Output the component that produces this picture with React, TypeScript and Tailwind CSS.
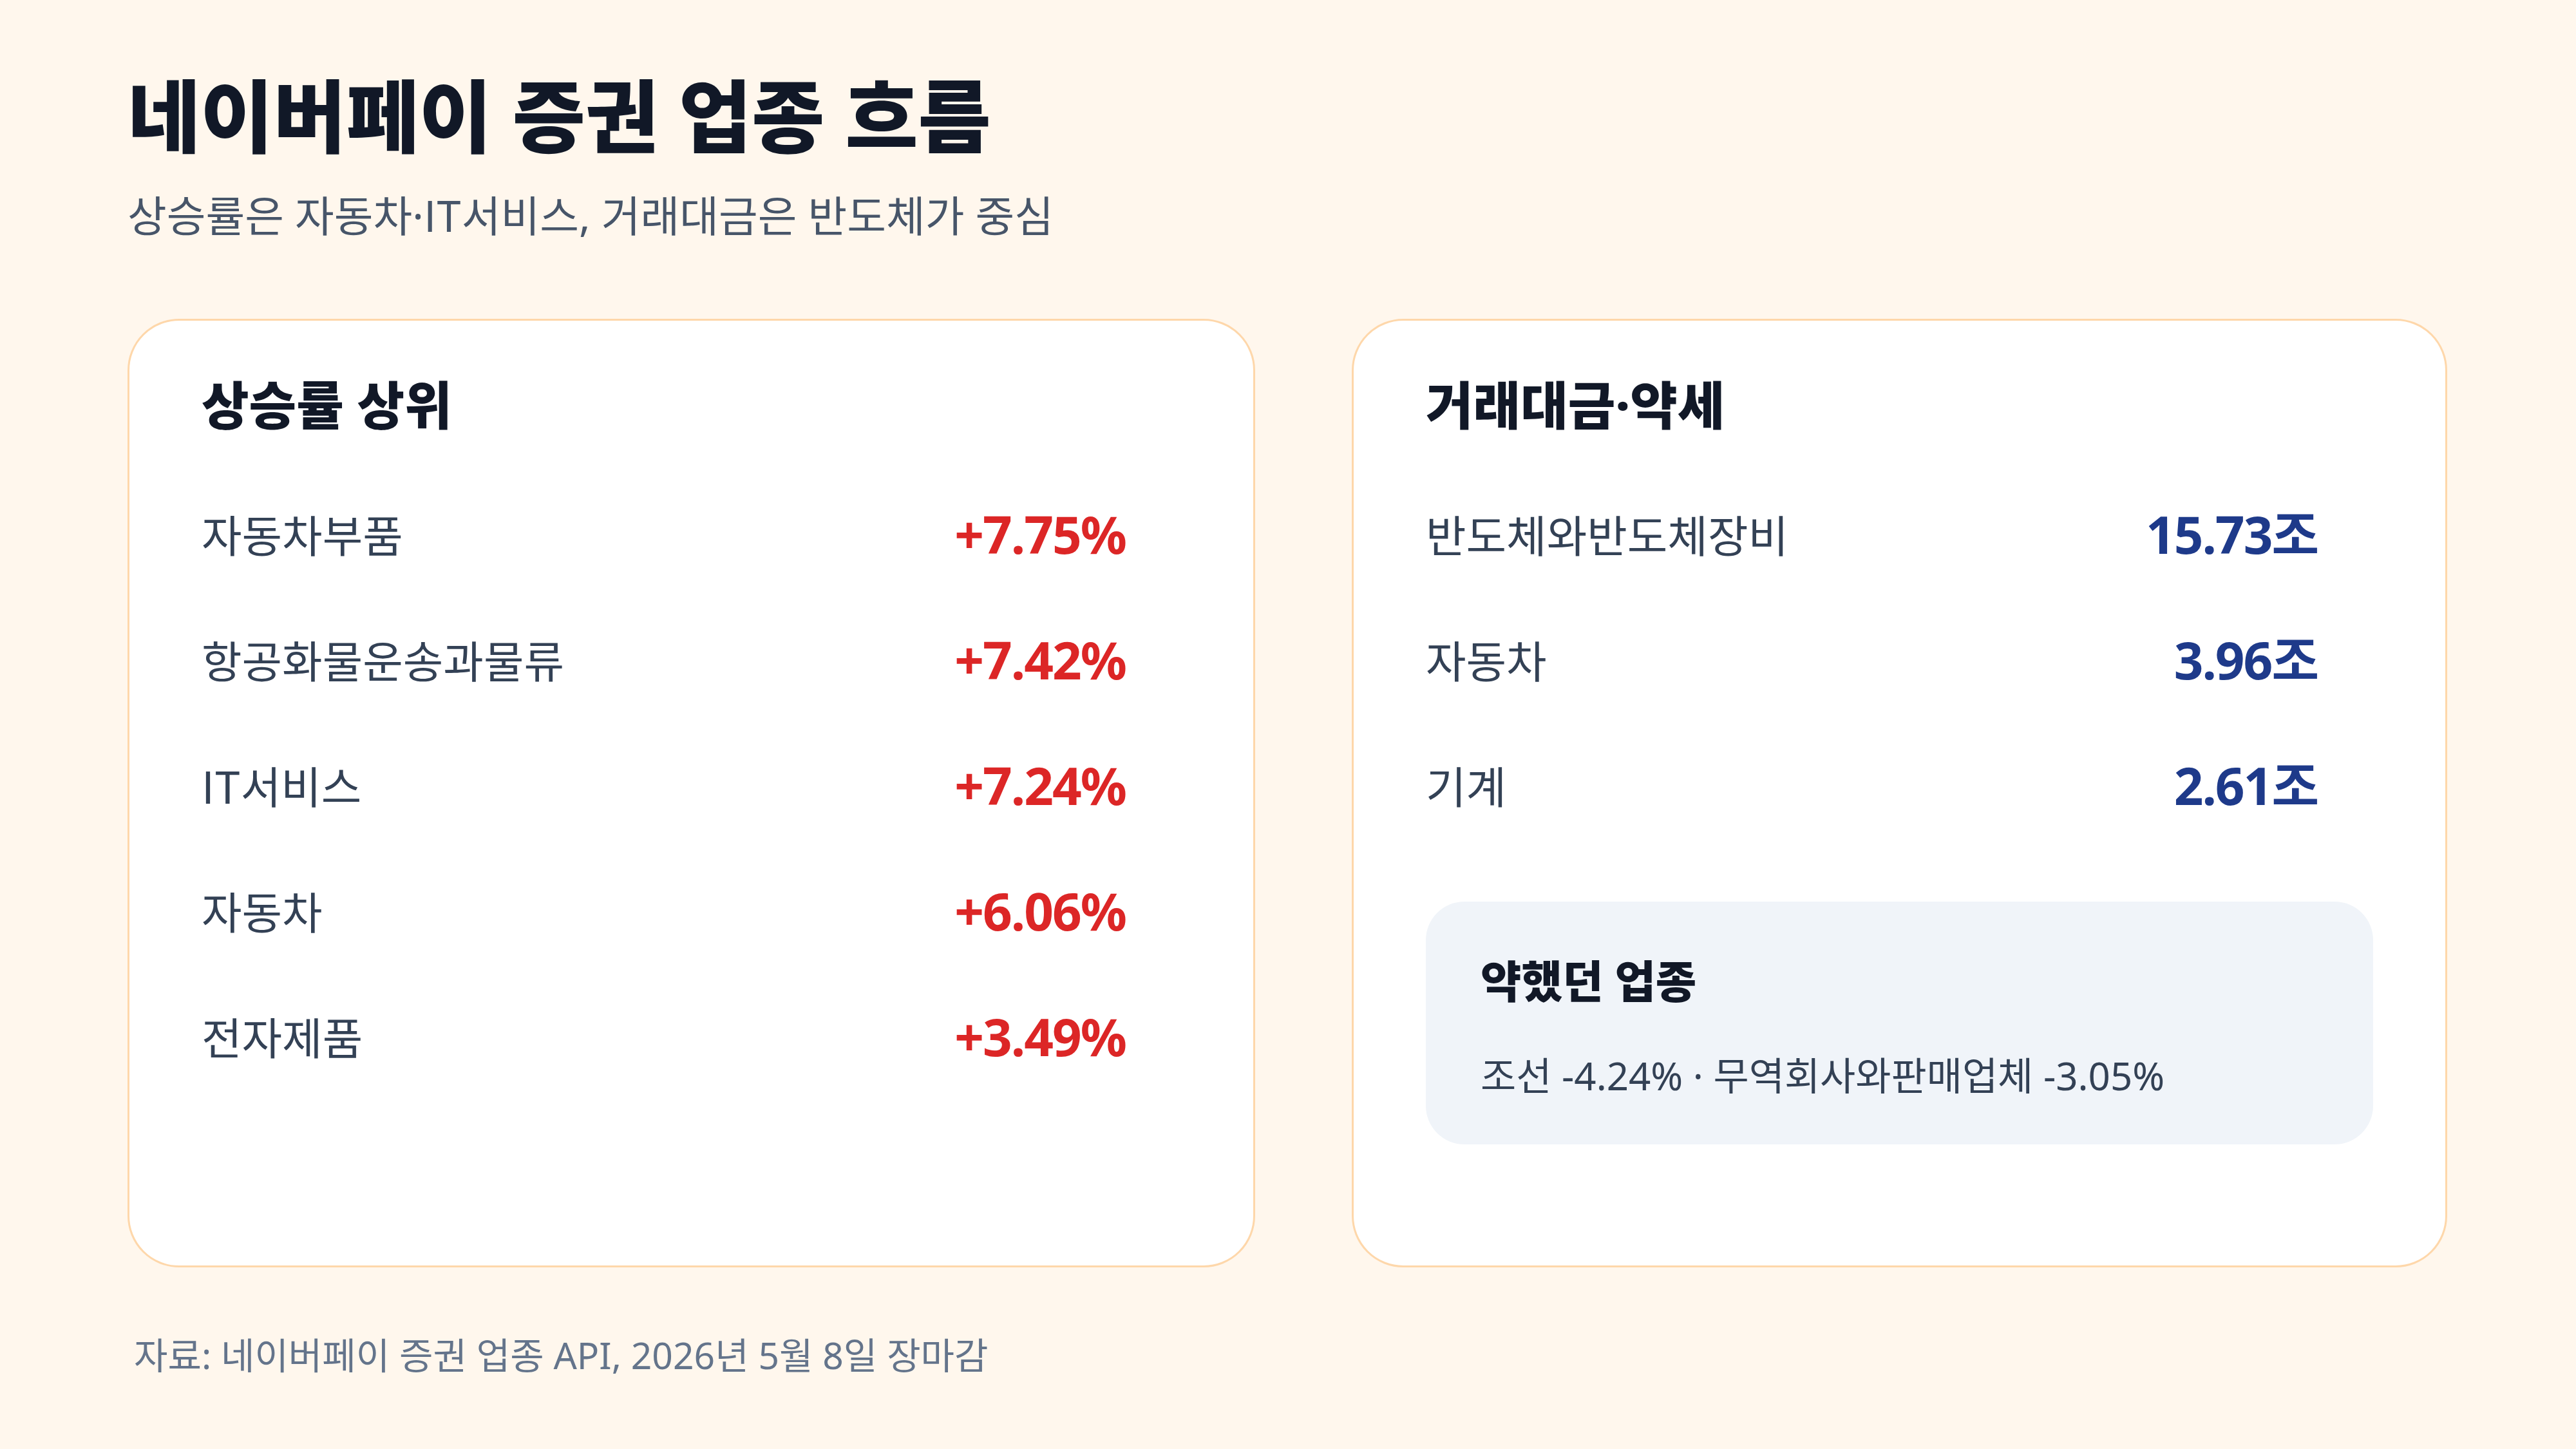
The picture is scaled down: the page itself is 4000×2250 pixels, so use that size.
import React from "react";

const FONT = { fontFamily: '"Noto Sans", "Noto Sans CJK KR", sans-serif' };
const CJK = { fontFamily: '"Noto Sans CJK KR", "Noto Sans", sans-serif' };

const gainers = [
  { name: "자동차부품", value: "+7.75%" },
  { name: "항공화물운송과물류", value: "+7.42%" },
  { name: "IT서비스", value: "+7.24%" },
  { name: "자동차", value: "+6.06%" },
  { name: "전자제품", value: "+3.49%" },
];

const volume = [
  { name: "반도체와반도체장비", value: "15.73조" },
  { name: "자동차", value: "3.96조" },
  { name: "기계", value: "2.61조" },
];

function Row({ name, value, color }: { name: string; value: string; color: string }) {
  return (
    <div className="flex h-[100px] items-center justify-between pr-[86px]">
      <span style={CJK} className="text-[68px] leading-[100px] text-[#334155]">{name}</span>
      <span className={`text-[80px] leading-[100px] font-bold tracking-[-2px] ${color}`}>{value}</span>
    </div>
  );
}

export default function App() {
  return (
    <div style={FONT} className="w-[4000px] h-[2250px] bg-[#fff7ed] pl-[198px] pr-[200px] pt-[108px]">
      <h1 className="text-[123px] leading-[144px] font-extrabold text-[#111827]">
        네이버페이 증권 업종 흐름
      </h1>
      <p className="mt-[39px] h-[87px] text-[66px] leading-[87px] text-[#475569]">
        상승률은 자동차·<span style={CJK} className="leading-none">IT</span>서비스, 거래대금은 반도체가 중심
      </p>
      <div className="mt-[117px] grid h-[1473px] grid-cols-[1751px_1701px] gap-x-[150px]">
        <div className="rounded-[80px] border-[3px] border-[#fed7aa] bg-white px-[112px] pt-[78px]">
          <h2 className="text-[80px] leading-[104px] font-extrabold text-[#111827]">상승률 상위</h2>
          <div className="mt-[99px] flex flex-col gap-[95px]">
            {gainers.map((g) => (
              <Row key={g.name} name={g.name} value={g.value} color="text-[#dc2626]" />
            ))}
          </div>
        </div>
        <div className="rounded-[80px] border-[3px] border-[#fed7aa] bg-white px-[112px] pt-[78px]">
          <h2 className="text-[80px] leading-[104px] font-extrabold text-[#111827]">거래대금·약세</h2>
          <div className="mt-[99px] flex flex-col gap-[95px]">
            {volume.map((g) => (
              <Row key={g.name} name={g.name} value={g.value} color="text-[#1e3a8a]" />
            ))}
          </div>
          <div className="mt-[131px] h-[377px] rounded-[60px] bg-[#f0f4f9] pl-[85px] pt-[78px]">
            <h3 className="text-[69px] leading-[91px] font-extrabold text-[#111827]">약했던 업종</h3>
            <p className="mt-[56px] text-[60px] leading-[90px] text-[#334155]">
              조선 -4.24% · 무역회사와판매업체 -3.05%
            </p>
          </div>
        </div>
      </div>
      <p className="mt-[95px] pl-[10px] text-[57px] leading-[82px] text-[#64748b]">
        자료: 네이버페이 증권 업종 API, 2026년 5월 8일 장마감
      </p>
    </div>
  );
}
